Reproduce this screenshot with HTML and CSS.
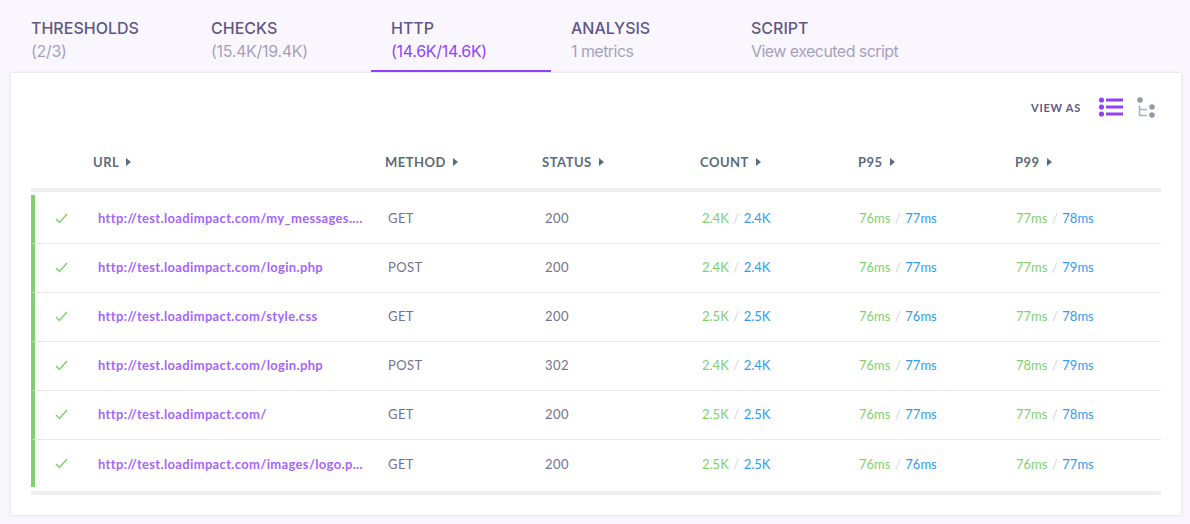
FILE: index.html
```html
<!DOCTYPE html>
<html lang="en">
<head>
    <meta charset="UTF-8">
    <title>HTTP</title>
    <link rel="stylesheet" href="styles.css">
</head>
<body>
    <nav class="tabs">
        <div class="tab"><span class="tab-title">THRESHOLDS</span><span class="tab-sub num">(2/3)</span></div>
        <div class="tab"><span class="tab-title">CHECKS</span><span class="tab-sub num">(15.4K/19.4K)</span></div>
        <div class="tab active"><span class="tab-title">HTTP</span><span class="tab-sub num">(14.6K/14.6K)</span></div>
        <div class="tab"><span class="tab-title">ANALYSIS</span><span class="tab-sub">1 metrics</span></div>
        <div class="tab"><span class="tab-title">SCRIPT</span><span class="tab-sub">View executed script</span></div>
    </nav>

    <section class="card">
        <div class="view-as">
            <span class="view-label">VIEW AS</span>
            <svg class="view-icon" width="25" height="20" viewBox="0 0 25 20">
                <g fill="#9241fb">
                    <circle cx="3.500" cy="3" r="2.600"/><circle cx="3.500" cy="10" r="2.600"/><circle cx="3.500" cy="17" r="2.600"/>
                    <rect x="8" y="1.500" width="17" height="3"/><rect x="8" y="8.500" width="17" height="3"/><rect x="8" y="15.500" width="17" height="3"/>
                </g>
            </svg>
            <svg class="view-icon tree" width="20" height="22" viewBox="0 0 20 22">
                <circle cx="4" cy="4" r="2.800" fill="#939ca6"/>
                <circle cx="16" cy="11" r="2.800" fill="#939ca6"/>
                <circle cx="16" cy="19" r="2.800" fill="#939ca6"/>
                <path d="M3.500 9.500V19.500H11M3.500 13.500H11" fill="none" stroke="#a9b0b8" stroke-width="1.500"/>
            </svg>
        </div>

        <div class="row head">
            <div class="cell url"><span>URL</span><i class="caret"></i></div>
            <div class="cell"><span>METHOD</span><i class="caret"></i></div>
            <div class="cell"><span>STATUS</span><i class="caret"></i></div>
            <div class="cell"><span>COUNT</span><i class="caret"></i></div>
            <div class="cell"><span>P95</span><i class="caret"></i></div>
            <div class="cell"><span>P99</span><i class="caret"></i></div>
        </div>

        <div class="rows">
            <div class="row item">
                <svg class="check" width="13" height="11" viewBox="0 0 13 11"><path d="M1 6l3.500 3.500L12 1" fill="none" stroke="#7fd16f" stroke-width="1.500"/></svg>
                <div class="cell url"><a>http://test.loadimpact.com/my_messages....</a></div>
                <div class="cell">GET</div>
                <div class="cell">200</div>
                <div class="cell pair count"><b>2.4K</b><s>/</s><em>2.4K</em></div>
                <div class="cell pair"><b>76ms</b><s>/</s><em>77ms</em></div>
                <div class="cell pair"><b>77ms</b><s>/</s><em>78ms</em></div>
            </div>
            <div class="row item">
                <svg class="check" width="13" height="11" viewBox="0 0 13 11"><path d="M1 6l3.500 3.500L12 1" fill="none" stroke="#7fd16f" stroke-width="1.500"/></svg>
                <div class="cell url"><a>http://test.loadimpact.com/login.php</a></div>
                <div class="cell">POST</div>
                <div class="cell">200</div>
                <div class="cell pair count"><b>2.4K</b><s>/</s><em>2.4K</em></div>
                <div class="cell pair"><b>76ms</b><s>/</s><em>77ms</em></div>
                <div class="cell pair"><b>77ms</b><s>/</s><em>79ms</em></div>
            </div>
            <div class="row item">
                <svg class="check" width="13" height="11" viewBox="0 0 13 11"><path d="M1 6l3.500 3.500L12 1" fill="none" stroke="#7fd16f" stroke-width="1.500"/></svg>
                <div class="cell url"><a>http://test.loadimpact.com/style.css</a></div>
                <div class="cell">GET</div>
                <div class="cell">200</div>
                <div class="cell pair count"><b>2.5K</b><s>/</s><em>2.5K</em></div>
                <div class="cell pair"><b>76ms</b><s>/</s><em>76ms</em></div>
                <div class="cell pair"><b>77ms</b><s>/</s><em>78ms</em></div>
            </div>
            <div class="row item">
                <svg class="check" width="13" height="11" viewBox="0 0 13 11"><path d="M1 6l3.500 3.500L12 1" fill="none" stroke="#7fd16f" stroke-width="1.500"/></svg>
                <div class="cell url"><a>http://test.loadimpact.com/login.php</a></div>
                <div class="cell">POST</div>
                <div class="cell">302</div>
                <div class="cell pair count"><b>2.4K</b><s>/</s><em>2.4K</em></div>
                <div class="cell pair"><b>76ms</b><s>/</s><em>77ms</em></div>
                <div class="cell pair"><b>78ms</b><s>/</s><em>79ms</em></div>
            </div>
            <div class="row item">
                <svg class="check" width="13" height="11" viewBox="0 0 13 11"><path d="M1 6l3.500 3.500L12 1" fill="none" stroke="#7fd16f" stroke-width="1.500"/></svg>
                <div class="cell url"><a>http://test.loadimpact.com/</a></div>
                <div class="cell">GET</div>
                <div class="cell">200</div>
                <div class="cell pair count"><b>2.5K</b><s>/</s><em>2.5K</em></div>
                <div class="cell pair"><b>76ms</b><s>/</s><em>77ms</em></div>
                <div class="cell pair"><b>77ms</b><s>/</s><em>78ms</em></div>
            </div>
            <div class="row item">
                <svg class="check" width="13" height="11" viewBox="0 0 13 11"><path d="M1 6l3.500 3.500L12 1" fill="none" stroke="#7fd16f" stroke-width="1.500"/></svg>
                <div class="cell url"><a>http://test.loadimpact.com/images/logo.p...</a></div>
                <div class="cell">GET</div>
                <div class="cell">200</div>
                <div class="cell pair count"><b>2.5K</b><s>/</s><em>2.5K</em></div>
                <div class="cell pair"><b>76ms</b><s>/</s><em>76ms</em></div>
                <div class="cell pair"><b>76ms</b><s>/</s><em>77ms</em></div>
            </div>
        </div>
    </section>
</body>
</html>
```

FILE: styles.css
```css
body {
    margin: 0;
    height: 524px;
    overflow: hidden;
    background-color: #f9f7fd;
    font-family: Lato, sans-serif;
}

.tabs {
    display: flex;
    height: 73px;
    padding-left: 11px;
    box-sizing: border-box;
    font-family: Inter, sans-serif;
}

.tab {
    display: flex;
    flex-direction: column;
    width: 180px;
    height: 72px;
    box-sizing: border-box;
    padding: 17px 0 0 20px;
    font-size: 16px;
    line-height: 23px;
}

.tab-title {
    font-weight: 500;
    letter-spacing: 0;
    color: #5f5787;
}

.tab-sub {
    letter-spacing: -0.55px;
    color: #a5a1bd;
}

.tab-sub.num {
    letter-spacing: -0.3px;
}

.tab.active {
    border-bottom: 2px solid #9241fb;
}

.tab.active .tab-sub {
    color: #9241fb;
}

.card {
    width: 1170px;
    height: 442px;
    margin-left: 11px;
    padding: 0 20px;
    box-sizing: border-box;
    background-color: #fff;
    box-shadow: 0 0 3px rgba(90, 80, 130, 0.2);
}

.view-as {
    display: flex;
    justify-content: flex-end;
    align-items: center;
    height: 68px;
    padding-right: 5px;
}

.view-label {
    margin-right: 17px;
    font-size: 11px;
    font-weight: 700;
    letter-spacing: 0.75px;
    color: #5f5787;
}

.view-icon {
    margin-right: 13px;
}

.view-icon.tree {
    margin-right: 0;
}

.row {
    display: grid;
    grid-template-columns: 62px 292px 157px 158px 158px 157px 146px;
    align-items: center;
}

.row.head {
    height: 47px;
    border-bottom: 4px solid #eeeef3;
    font-size: 13px;
    font-weight: 700;
    letter-spacing: 0.5px;
    color: #5c6b7c;
}

.row.head .cell {
    margin-bottom: 6px;
}

.row.head .url {
    grid-column: 2;
}

.caret {
    display: inline-block;
    margin: 0 0 3px 7px;
    border-left: 5px solid #5c6b7c;
    border-top: 4px solid transparent;
    border-bottom: 4px solid transparent;
    vertical-align: middle;
}

.rows {
    padding: 3px 0 4px;
    border-bottom: 4px solid #eeeef3;
}

.row.item {
    height: 49px;
    box-sizing: border-box;
    padding-bottom: 2px;
    border-left: 4px solid #7fd16f;
    border-bottom: 1px solid #e8e8ed;
    grid-template-columns: 58px 292px 157px 158px 158px 157px 146px;
    font-size: 13px;
    letter-spacing: 0.4px;
    color: #75718f;
}

.row.item:last-child {
    height: 47px;
    padding-bottom: 0;
    border-bottom: 0;
}

.row.item .cell {
    padding-left: 3px;
}

.row.item .url {
    padding-left: 5px;
    font-weight: 700;
    letter-spacing: 0.34px;
}

.row.item .pair {
    padding-left: 1px;
    letter-spacing: 0;
}

.row.item .count {
    padding-left: 2px;
}

.check {
    margin-left: 20px;
}

.url a {
    color: #a566fb;
}

.pair b {
    font-weight: 400;
    color: #7fd16f;
}

.pair s {
    margin: 0 4.5px;
    text-decoration: none;
    color: #d5d5dc;
}

.pair em {
    font-style: normal;
    color: #2f9bfb;
}
```
